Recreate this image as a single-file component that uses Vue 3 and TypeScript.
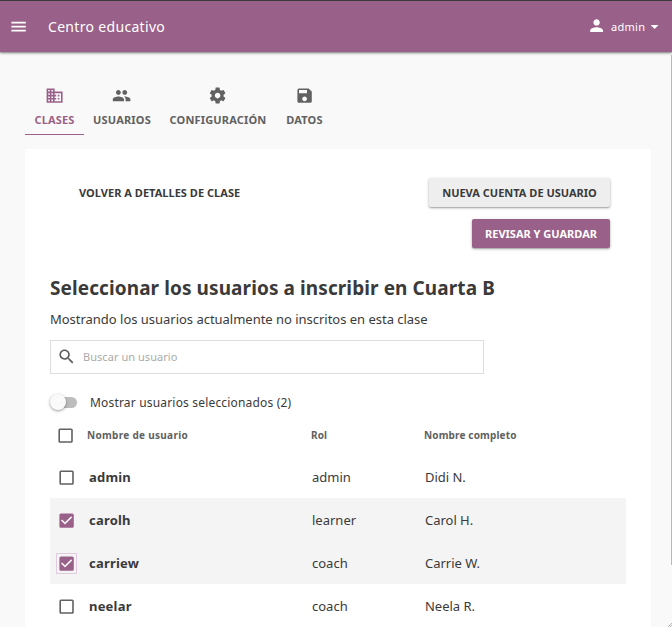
<script setup lang="ts">
import { ref } from 'vue'

interface Tab {
  label: string
  icon: string
  width: number
}

interface User {
  username: string
  role: string
  fullName: string
  selected: boolean
  focused?: boolean
}

const tabs: Tab[] = [
  {
    label: 'CLASES',
    width: 59,
    icon: 'M12 7V3H2v18h20V7H12zM6 19H4v-2h2v2zm0-4H4v-2h2v2zm0-4H4V9h2v2zm0-4H4V5h2v2zm4 12H8v-2h2v2zm0-4H8v-2h2v2zm0-4H8V9h2v2zm0-4H8V5h2v2zm10 12h-8v-2h2v-2h-2v-2h2v-2h-2V9h8v10zm-2-8h-2v2h2v-2zm0 4h-2v2h2v-2z',
  },
  {
    label: 'USUARIOS',
    width: 76,
    icon: 'M16 11c1.66 0 2.99-1.34 2.99-3S17.66 5 16 5c-1.66 0-3 1.34-3 3s1.34 3 3 3zm-8 0c1.66 0 2.99-1.34 2.99-3S9.66 5 8 5C6.34 5 5 6.34 5 8s1.34 3 3 3zm0 2c-2.33 0-7 1.17-7 3.5V19h14v-2.5c0-2.33-4.67-3.5-7-3.5zm8 0c-.29 0-.62.02-.97.05 1.16.84 1.97 1.97 1.97 3.45V19h6v-2.5c0-2.33-4.67-3.5-7-3.5z',
  },
  {
    label: 'CONFIGURACIÓN',
    width: 116,
    icon: 'M19.43 12.98c.04-.32.07-.64.07-.98s-.03-.66-.07-.98l2.11-1.65c.19-.15.24-.42.12-.64l-2-3.46c-.12-.22-.39-.3-.61-.22l-2.49 1c-.52-.4-1.08-.73-1.69-.98l-.38-2.65C14.46 2.18 14.25 2 14 2h-4c-.25 0-.46.18-.49.42l-.38 2.65c-.61.25-1.17.59-1.69.98l-2.49-1c-.23-.09-.49 0-.61.22l-2 3.46c-.13.22-.07.49.12.64l2.11 1.65c-.04.32-.07.65-.07.98s.03.66.07.98l-2.11 1.65c-.19.15-.24.42-.12.64l2 3.46c.12.22.39.3.61.22l2.49-1c.52.4 1.08.73 1.69.98l.38 2.65c.03.24.24.42.49.42h4c.25 0 .46-.18.49-.42l.38-2.65c.61-.25 1.17-.59 1.69-.98l2.49 1c.23.09.49 0 .61-.22l2-3.46c.12-.22.07-.49-.12-.64l-2.11-1.65zM12 15.5c-1.93 0-3.5-1.57-3.5-3.5s1.57-3.5 3.5-3.5 3.5 1.57 3.5 3.5-1.57 3.5-3.5 3.5z',
  },
  {
    label: 'DATOS',
    width: 57,
    icon: 'M17 3H5c-1.11 0-2 .9-2 2v14c0 1.1.89 2 2 2h14c1.1 0 2-.9 2-2V7l-4-4zm-5 16c-1.66 0-3-1.34-3-3s1.34-3 3-3 3 1.34 3 3-1.34 3-3 3zm3-10H5V5h10v4z',
  },
]

const boxOutline =
  'M19 5v14H5V5h14m0-2H5c-1.1 0-2 .9-2 2v14c0 1.1.9 2 2 2h14c1.1 0 2-.9 2-2V5c0-1.1-.9-2-2-2z'
const boxChecked =
  'M19 3H5c-1.11 0-2 .9-2 2v14c0 1.1.89 2 2 2h14c1.11 0 2-.9 2-2V5c0-1.1-.89-2-2-2zm-9 14l-5-5 1.41-1.41L10 14.17l7.59-7.59L19 8l-9 9z'

const activeTab = ref('CLASES')
const users = ref<User[]>([
  { username: 'admin', role: 'admin', fullName: 'Didi N.', selected: false },
  { username: 'carolh', role: 'learner', fullName: 'Carol H.', selected: true },
  { username: 'carriew', role: 'coach', fullName: 'Carrie W.', selected: true, focused: true },
  { username: 'neelar', role: 'coach', fullName: 'Neela R.', selected: false },
])
</script>

<template>
  <div class="page">
    <header class="bar">
      <svg class="menu" viewBox="0 0 24 24"><path d="M3 18h18v-2H3v2zm0-5h18v-2H3v2zm0-7v2h18V6H3z" /></svg>
      <span class="title">Centro educativo</span>
      <svg class="person" viewBox="0 0 24 24"><path d="M12 12c2.21 0 4-1.79 4-4s-1.79-4-4-4-4 1.79-4 4 1.79 4 4 4zm0 2c-2.67 0-8 1.34-8 4v2h16v-2c0-2.66-5.33-4-8-4z" /></svg>
      <span class="account">admin</span>
      <svg class="caret" viewBox="0 0 24 24"><path d="M7 10l5 5 5-5z" /></svg>
    </header>

    <nav class="tabs">
      <a
        v-for="tab in tabs"
        :key="tab.label"
        class="tab"
        :class="{ active: tab.label === activeTab }"
        :style="{ width: tab.width + 'px' }"
        @click="activeTab = tab.label"
      >
        <svg viewBox="0 0 24 24"><path :d="tab.icon" /></svg>
        <span>{{ tab.label }}</span>
      </a>
    </nav>

    <main class="card">
      <div class="actions">
        <a class="back">VOLVER A DETALLES DE CLASE</a>
        <div class="buttons">
          <button class="btn light">NUEVA CUENTA DE USUARIO</button>
          <button class="btn primary">REVISAR Y GUARDAR</button>
        </div>
      </div>

      <h1>Seleccionar los usuarios a inscribir en Cuarta B</h1>
      <p class="intro">Mostrando los usuarios actualmente no inscritos en esta clase</p>

      <div class="search">
        <svg viewBox="0 0 24 24"><path d="M15.5 14h-.79l-.28-.27C15.41 12.59 16 11.11 16 9.5 16 5.91 13.09 3 9.5 3S3 5.91 3 9.5 5.91 16 9.5 16c1.61 0 3.09-.59 4.23-1.57l.27.28v.79l5 4.99L20.49 19l-4.99-5zm-6 0C7.01 14 5 11.99 5 9.5S7.01 5 9.5 5 14 7.01 14 9.5 11.99 14 9.5 14z" /></svg>
        <span>Buscar un usuario</span>
      </div>

      <div class="toggle">
        <span class="switch"><span class="thumb"></span></span>
        <span class="toggle-label">Mostrar usuarios seleccionados (2)</span>
      </div>

      <div class="row head">
        <span class="check"><svg viewBox="0 0 24 24"><path :d="boxOutline" /></svg></span>
        <span class="h-user">Nombre de usuario</span>
        <span class="h-role">Rol</span>
        <span class="h-name">Nombre completo</span>
      </div>
      <div
        v-for="user in users"
        :key="user.username"
        class="row"
        :class="{ selected: user.selected }"
        @click="user.selected = !user.selected"
      >
        <span class="check" :class="{ focused: user.focused }">
          <svg viewBox="0 0 24 24"><path :d="user.selected ? boxChecked : boxOutline" /></svg>
        </span>
        <b>{{ user.username }}</b>
        <span class="role">{{ user.role }}</span>
        <span class="name">{{ user.fullName }}</span>
      </div>
    </main>

    <div class="scrollbar"></div>
    <svg class="grip" viewBox="0 0 4 4"><path d="M0 4L4 0M2 4L4 2" /></svg>
  </div>
</template>

<style>
body {
  overflow: hidden;
}
</style>

<style scoped>
.page {
  position: relative;
  height: 627px;
  overflow: hidden;
  box-sizing: border-box;
  border-top: 1px solid #3a3a3a;
  background: #f9f9f9;
  color: #3a3a3a;
  font-family: 'Noto Sans', sans-serif;
  font-size: 13px;
  white-space: nowrap;
}
svg {
  display: block;
  flex: none;
  width: 19.2px;
  height: 19.2px;
  fill: currentColor;
}
.bar {
  position: relative;
  display: flex;
  align-items: center;
  box-sizing: border-box;
  height: 51px;
  padding: 0 8px 0 9px;
  background: #996189;
  color: #fff;
  box-shadow: 0 1px 3px rgba(0, 0, 0, 0.4), 0 1px 1px rgba(0, 0, 0, 0.14);
}
.title {
  margin-left: 19.8px;
  font-size: 14px;
  letter-spacing: 0.32px;
}
.person {
  margin: 0 4.6px 2px auto;
}
.account {
  margin-right: -0.6px;
  font-size: 11px;
  letter-spacing: 0.32px;
}
.tabs {
  display: flex;
  height: 83px;
  padding-left: 25px;
}
.tab {
  display: flex;
  flex-direction: column;
  align-items: center;
  box-sizing: border-box;
  padding-top: 34px;
  color: #616161;
  font-size: 11px;
  font-weight: 700;
  line-height: 16px;
  letter-spacing: 0.17px;
}
.tab svg {
  margin-bottom: 6.8px;
}
.tab.active {
  color: #996189;
  border-bottom: 1px solid #996189;
}
.card {
  box-sizing: border-box;
  height: 500px;
  margin: 14px 21px 0 25px;
  padding: 29px 25px 0;
  background: #fff;
}
.actions {
  display: flex;
  justify-content: space-between;
  padding: 0 16px 0 29px;
  font-size: 11px;
  font-weight: 700;
  line-height: 29px;
}
.back {
  letter-spacing: 0.03px;
}
.buttons {
  display: flex;
  flex-direction: column;
  align-items: flex-end;
  gap: 12px;
}
.btn {
  height: 29px;
  padding: 0;
  border: 0;
  border-radius: 2px;
  font: inherit;
  text-align: center;
  box-shadow: 0 1px 3px rgba(0, 0, 0, 0.3), 0 1px 1px rgba(0, 0, 0, 0.14);
}
.light {
  width: 181px;
  background: #eee;
  color: #3a3a3a;
}
.primary {
  width: 138px;
  background: #996189;
  color: #fff;
}
h1 {
  margin: 27px 0 0;
  font-size: 19px;
  line-height: 26px;
  letter-spacing: 0.09px;
}
.intro {
  margin: 9px 0 0;
  line-height: 18px;
  letter-spacing: -0.02px;
}
.search {
  display: flex;
  align-items: center;
  box-sizing: border-box;
  width: 434px;
  height: 34px;
  margin-top: 12px;
  padding: 0 0 2px 6px;
  border: 1px solid #dedede;
  color: #aaa;
  font-size: 11px;
  letter-spacing: 0.05px;
}
.search svg {
  margin: 1.2px 6.8px 0 0;
  color: #5b5b5b;
}
.toggle {
  display: flex;
  align-items: center;
  height: 18px;
  margin-top: 19px;
  font-size: 12px;
}
.switch {
  display: flex;
  align-items: center;
  width: 24px;
  height: 11px;
  margin-left: 3px;
  border-radius: 6px;
  background: #bdbdbd;
}
.thumb {
  flex: none;
  width: 16px;
  height: 16px;
  margin-left: -3px;
  border-radius: 50%;
  background: #fafafa;
  box-shadow: 0 1px 3px rgba(0, 0, 0, 0.4);
}
.toggle-label {
  margin-left: 13px;
  letter-spacing: 0.18px;
}
.row {
  display: grid;
  grid-template-columns: 39px 223px 113px 1fr;
  align-items: center;
  height: 43px;
}
.row b {
  letter-spacing: 0.2px;
}
.check {
  box-sizing: border-box;
  width: 21px;
  height: 21px;
  margin: 2px 0 0 6px;
  border: 1px solid transparent;
  color: #616161;
}
.check svg {
  margin: -0.3px 0 0 -0.3px;
}
.head {
  grid-template-columns: 37px 224px 113px 1fr;
  margin-top: 5px;
  height: 39px;
  color: #616161;
  font-size: 10px;
  font-weight: 700;
}
.head .check {
  margin: 1px 0 0 5px;
}
.head > span:not(.check) {
  margin-top: -2px;
}
.h-user {
  letter-spacing: 0.3px;
}
.h-role,
.h-name {
  letter-spacing: 0.15px;
}
.selected {
  background: #f4f4f4;
}
.selected .check {
  color: #996189;
}
.check.focused {
  border-color: #e0cbe0;
}
.name {
  letter-spacing: -0.02px;
}
.scrollbar {
  position: absolute;
  right: 0;
  top: 54px;
  width: 1px;
  height: 510px;
  background: #b9b9b9;
}
.grip {
  position: absolute;
  right: 0;
  bottom: 0;
  width: 4px;
  height: 4px;
  stroke: #888;
  stroke-width: 0.6;
}
</style>
